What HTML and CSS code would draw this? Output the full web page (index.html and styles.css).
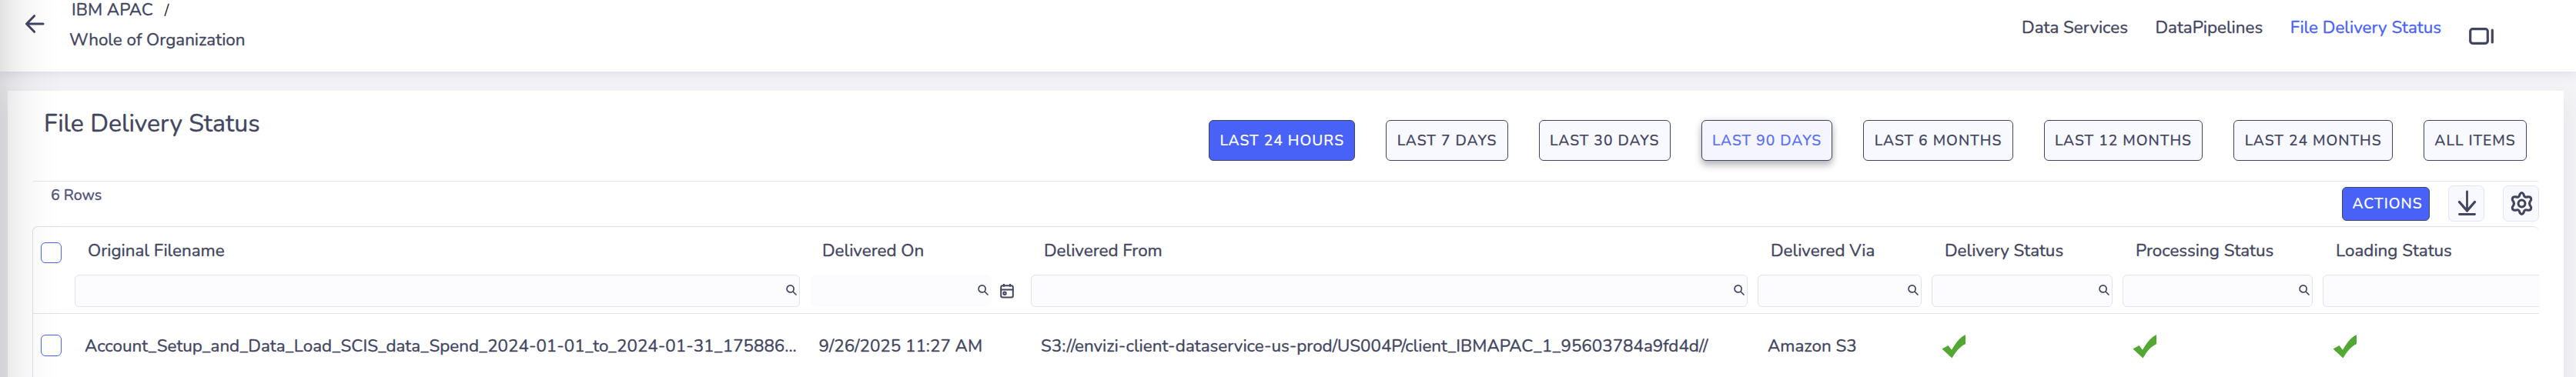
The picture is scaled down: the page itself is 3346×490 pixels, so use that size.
FILE: index.html
```
<!DOCTYPE html>
<html lang="en">
<head>
<meta charset="utf-8">
<title>File Delivery Status</title>
<link rel="stylesheet" href="styles.css">
</head>
<body>
<svg class="defs" aria-hidden="true">
  <symbol id="search" viewBox="0 0 14 14"><circle cx="5.6" cy="5.4" r="4.5"/><path d="M9 9l4 4"/></symbol>
  <symbol id="tick" viewBox="0 0 32 31"><path d="M.5 18.500L8.500 14L13 19.800C18 11 23 4 31 0V12C24 15.500 19 21 13.500 30.500Z"/></symbol>
</svg>
<div class="app">
  <header class="topbar">
    <svg class="back" viewBox="0 0 26 24"><path d="M12.500 1.700L2.500 12l10 10.300M2.500 12h21.500"/></svg>
    <div class="crumbs">
      <div class="crumb-line"><span class="crumb-root">IBM APAC</span><span class="slash">/</span></div>
      <div class="crumb-line">Whole of Organization</div>
    </div>
    <nav class="nav">
      <a>Data Services</a>
      <a>DataPipelines</a>
      <a class="current">File Delivery Status</a>
      <svg class="dock" viewBox="0 0 33 22"><rect x="1.700" y="1.700" width="22.600" height="18.600" rx="3"/><path d="M30.300 3v16"/></svg>
    </nav>
  </header>
  <main class="panel">
    <div class="panel-head">
      <h1>File Delivery Status</h1>
      <div class="ranges">
        <button class="btn primary">LAST 24 HOURS</button>
        <button class="btn">LAST 7 DAYS</button>
        <button class="btn">LAST 30 DAYS</button>
        <button class="btn hover">LAST 90 DAYS</button>
        <button class="btn">LAST 6 MONTHS</button>
        <button class="btn">LAST 12 MONTHS</button>
        <button class="btn">LAST 24 MONTHS</button>
        <button class="btn">ALL ITEMS</button>
      </div>
    </div>
    <div class="toolbar">
      <span class="count">6 Rows</span>
      <div class="tools">
        <button class="btn primary actions">ACTIONS</button>
        <button class="icon-btn"><svg viewBox="0 0 47 47"><path class="thin" d="M24.500 8v25"/><path d="M14.500 21.500l10 11.500l10-11.500"/><path class="thin" d="M14.500 37.500h20"/></svg></button>
        <button class="icon-btn"><svg class="gear" viewBox="0 0 30 30"><path d="M12.600 3.500Q15 -.5 17.400 3.500Q18.200 8.500 22.800 6.500Q27.400 6.200 26.700 10.600Q22.800 15 26.700 19.400Q27.400 23.800 22.800 23.500Q18.200 21.500 17.400 26.500Q15 30.500 12.600 26.500Q11.800 21.500 7.200 23.500Q2.600 23.800 3.300 19.400Q7.200 15 3.300 10.600Q2.600 6.200 7.200 6.500Q11.800 8.500 12.600 3.500Z"/><circle cx="15" cy="15" r="4.300"/></svg></button>
      </div>
    </div>
    <div class="table">
      <div class="row head">
        <div class="cell pick"><span class="box"></span></div>
        <div class="cell"><span class="label">Original Filename</span><div class="field"><svg class="search"><use href="#search"/></svg></div></div>
        <div class="cell date"><span class="label">Delivered On</span>
          <div class="date-filter"><div class="field plain"><svg class="search"><use href="#search"/></svg></div>
          <svg class="calendar" viewBox="0 0 18 19"><rect x="1.200" y="2.200" width="15.600" height="15.300" rx="2.200"/><path d="M1.200 7.500h15.600M5 .5v2.500M13 .5v2.500"/><circle cx="6" cy="12.200" r="1.700"/></svg></div>
        </div>
        <div class="cell"><span class="label">Delivered From</span><div class="field"><svg class="search"><use href="#search"/></svg></div></div>
        <div class="cell"><span class="label">Delivered Via</span><div class="field"><svg class="search"><use href="#search"/></svg></div></div>
        <div class="cell"><span class="label">Delivery Status</span><div class="field"><svg class="search"><use href="#search"/></svg></div></div>
        <div class="cell"><span class="label">Processing Status</span><div class="field"><svg class="search"><use href="#search"/></svg></div></div>
        <div class="cell last"><span class="label">Loading Status</span><div class="field"></div></div>
      </div>
      <div class="row body">
        <div class="cell pick"><span class="box"></span></div>
        <div class="cell">Account_Setup_and_Data_Load_SCIS_data_Spend_2024-01-01_to_2024-01-31_175886...</div>
        <div class="cell stamp">9/26/2025 11:27 AM</div>
        <div class="cell">S3://envizi-client-dataservice-us-prod/US004P/client_IBMAPAC_1_95603784a9fd4d//</div>
        <div class="cell">Amazon S3</div>
        <div class="cell"><svg class="tick"><use href="#tick"/></svg></div>
        <div class="cell"><svg class="tick"><use href="#tick"/></svg></div>
        <div class="cell"><svg class="tick"><use href="#tick"/></svg></div>
      </div>
    </div>
  </main>
  <div class="side-shade"></div>
</div>
</body>
</html>
```
FILE: styles.css
```
* { box-sizing: border-box; }

body {
  margin: 0;
  background: #f4f4f7;
  color: #424560;
  font: 22.4px/30px Nunito, Lato, "Noto Sans", sans-serif;
  -webkit-text-stroke: .35px;
}

svg {
  display: block;
  flex: none;
  fill: none;
  stroke: #424560;
  stroke-linecap: round;
  stroke-linejoin: round;
}

.defs { position: absolute; width: 0; height: 0; }

.app {
  position: relative;
  height: 490px;
  overflow: hidden;
}

/* Header */
.topbar {
  position: relative;
  z-index: 1;
  display: flex;
  height: 93px;
  padding-left: 32px;
  background: #fff;
  box-shadow: 0 2px 14px rgba(66, 69, 110, .14);
}

.back { width: 26px; height: 24px; margin: 19px 32px 0 0; stroke-width: 3; }

.crumb-line { height: 39px; line-height: 26px; white-space: nowrap; }
.crumb-root { margin-left: 3px; }
.slash { margin-left: 15px; font-size: 20px; line-height: 20px; color: #222; -webkit-text-stroke: 0; }

.nav {
  display: flex;
  gap: 35.5px;
  margin: 21px 106px 0 auto;
}
.nav .current { color: #4861f7; }
.dock { width: 33px; height: 22px; margin: 15px 0 0 .5px; stroke-width: 3.2; }

/* Panel */
.panel {
  width: 3320px;
  height: 400px;
  margin: 25px 0 0 10px;
  padding: 0 32px;
  background: #fff;
  box-shadow: 0 12px 28px rgba(66, 69, 96, .1);
}

.panel-head {
  display: flex;
  justify-content: space-between;
  height: 117px;
  padding: 22px 16px 0 15px;
}

h1 {
  margin: 1px 0 0;
  font-size: 32px;
  line-height: 40px;
  font-weight: 400;
}

.ranges { display: flex; gap: 40px; margin-top: 16px; }

.btn {
  height: 53px;
  padding: 0 13.350px;
  border: 1px solid #424560;
  border-radius: 6px;
  background: #f8f9ff;
  color: #424560;
  font: 500 19.2px/26px Nunito, Lato, "Noto Sans", sans-serif;
  letter-spacing: 1px;
  white-space: nowrap;
  -webkit-text-stroke: .2px;
}
.btn.primary { background: #4861f7; color: #fff; }
.btn.hover {
  background: #f4f5ff;
  color: #5a70f8;
  box-shadow: 0 6px 10px rgba(0, 0, 0, .25), 0 0 8px rgba(0, 0, 0, .1);
}

.toolbar {
  display: flex;
  justify-content: space-between;
  height: 59px;
  border-top: 1px solid #e2e5f2;
  border-radius: 4px;
}
.count { margin: 5px 0 0 24px; font-size: 19.6px; line-height: 26px; color: #4f5078; }
.tools { display: flex; gap: 24px; padding-top: 5px; }
.btn.actions { width: 114px; height: 44px; margin-top: 2px; padding: 0 8px 0 12px; }
.icon-btn {
  width: 47px;
  height: 47px;
  padding: 0;
  border: 1px solid #e2e5f2;
  border-radius: 7px;
  background: #f8f9ff;
}
.icon-btn svg { width: 47px; height: 47px; margin: -1px; stroke-width: 3.4; }
.icon-btn .thin { stroke-width: 2.8; }
.icon-btn .gear { width: 31px; height: 31px; margin: 7px 8px; stroke-width: 3; }

/* Table */
.table {
  height: 220px;
  border: solid #dfe2ee;
  border-width: 1px 0 0 1px;
  border-radius: 7px 7px 0 0;
  overflow: hidden;
}
.row {
  display: grid;
  grid-template-columns: 48px 955px 287px 944px 226px 248px 260px 287px;
}
.head { height: 113px; border-bottom: 1px solid #dfe2ee; }
.head .cell { padding: 16px 7px 0 6px; }
.label { display: block; height: 46px; padding: 0 0 0 17px; }
.head .date { padding: 16px 12px 0 7px; }
.date .label { padding-left: 15px; }
.date-filter { display: flex; align-items: center; gap: 11px; }
.date .field { width: 235px; }

.field {
  display: flex;
  align-items: center;
  justify-content: flex-end;
  height: 42px;
  padding: 0 3px 3px 0;
  border: 1px solid #dfe2ee;
  border-radius: 6px;
  background: #fcfcff;
}
.field.plain { border-color: #fcfcff; }
.last .field { width: 300px; }
.search { width: 14px; height: 14px; stroke-width: 1.7; }
.calendar { width: 18px; height: 19px; stroke-width: 2; }

.box {
  display: block;
  width: 27px;
  height: 27px;
  border: 1px solid #4861f7;
  border-radius: 6px;
  background: #fff;
}

.body { height: 84px; white-space: nowrap; }
.body .cell { padding: 27px 0 0 19px; }
.body .stamp { padding-left: 17.5px; }
.head .pick { padding: 20px 0 0 10px; }
.body .pick { padding: 27px 0 0 10px; }
.body .box { height: 28px; }
.tick { width: 32px; height: 31px; stroke: none; fill: #52a832; }

/* Shadow cast by the side menu */
.side-shade {
  position: absolute;
  z-index: 2;
  inset: 0 auto 0 0;
  width: 80px;
  background: linear-gradient(90deg, rgba(0, 0, 0, .115), rgba(0, 0, 0, .07) 18%, rgba(0, 0, 0, .03) 45%, rgba(0, 0, 0, .01) 70%, transparent);
  pointer-events: none;
}
```
